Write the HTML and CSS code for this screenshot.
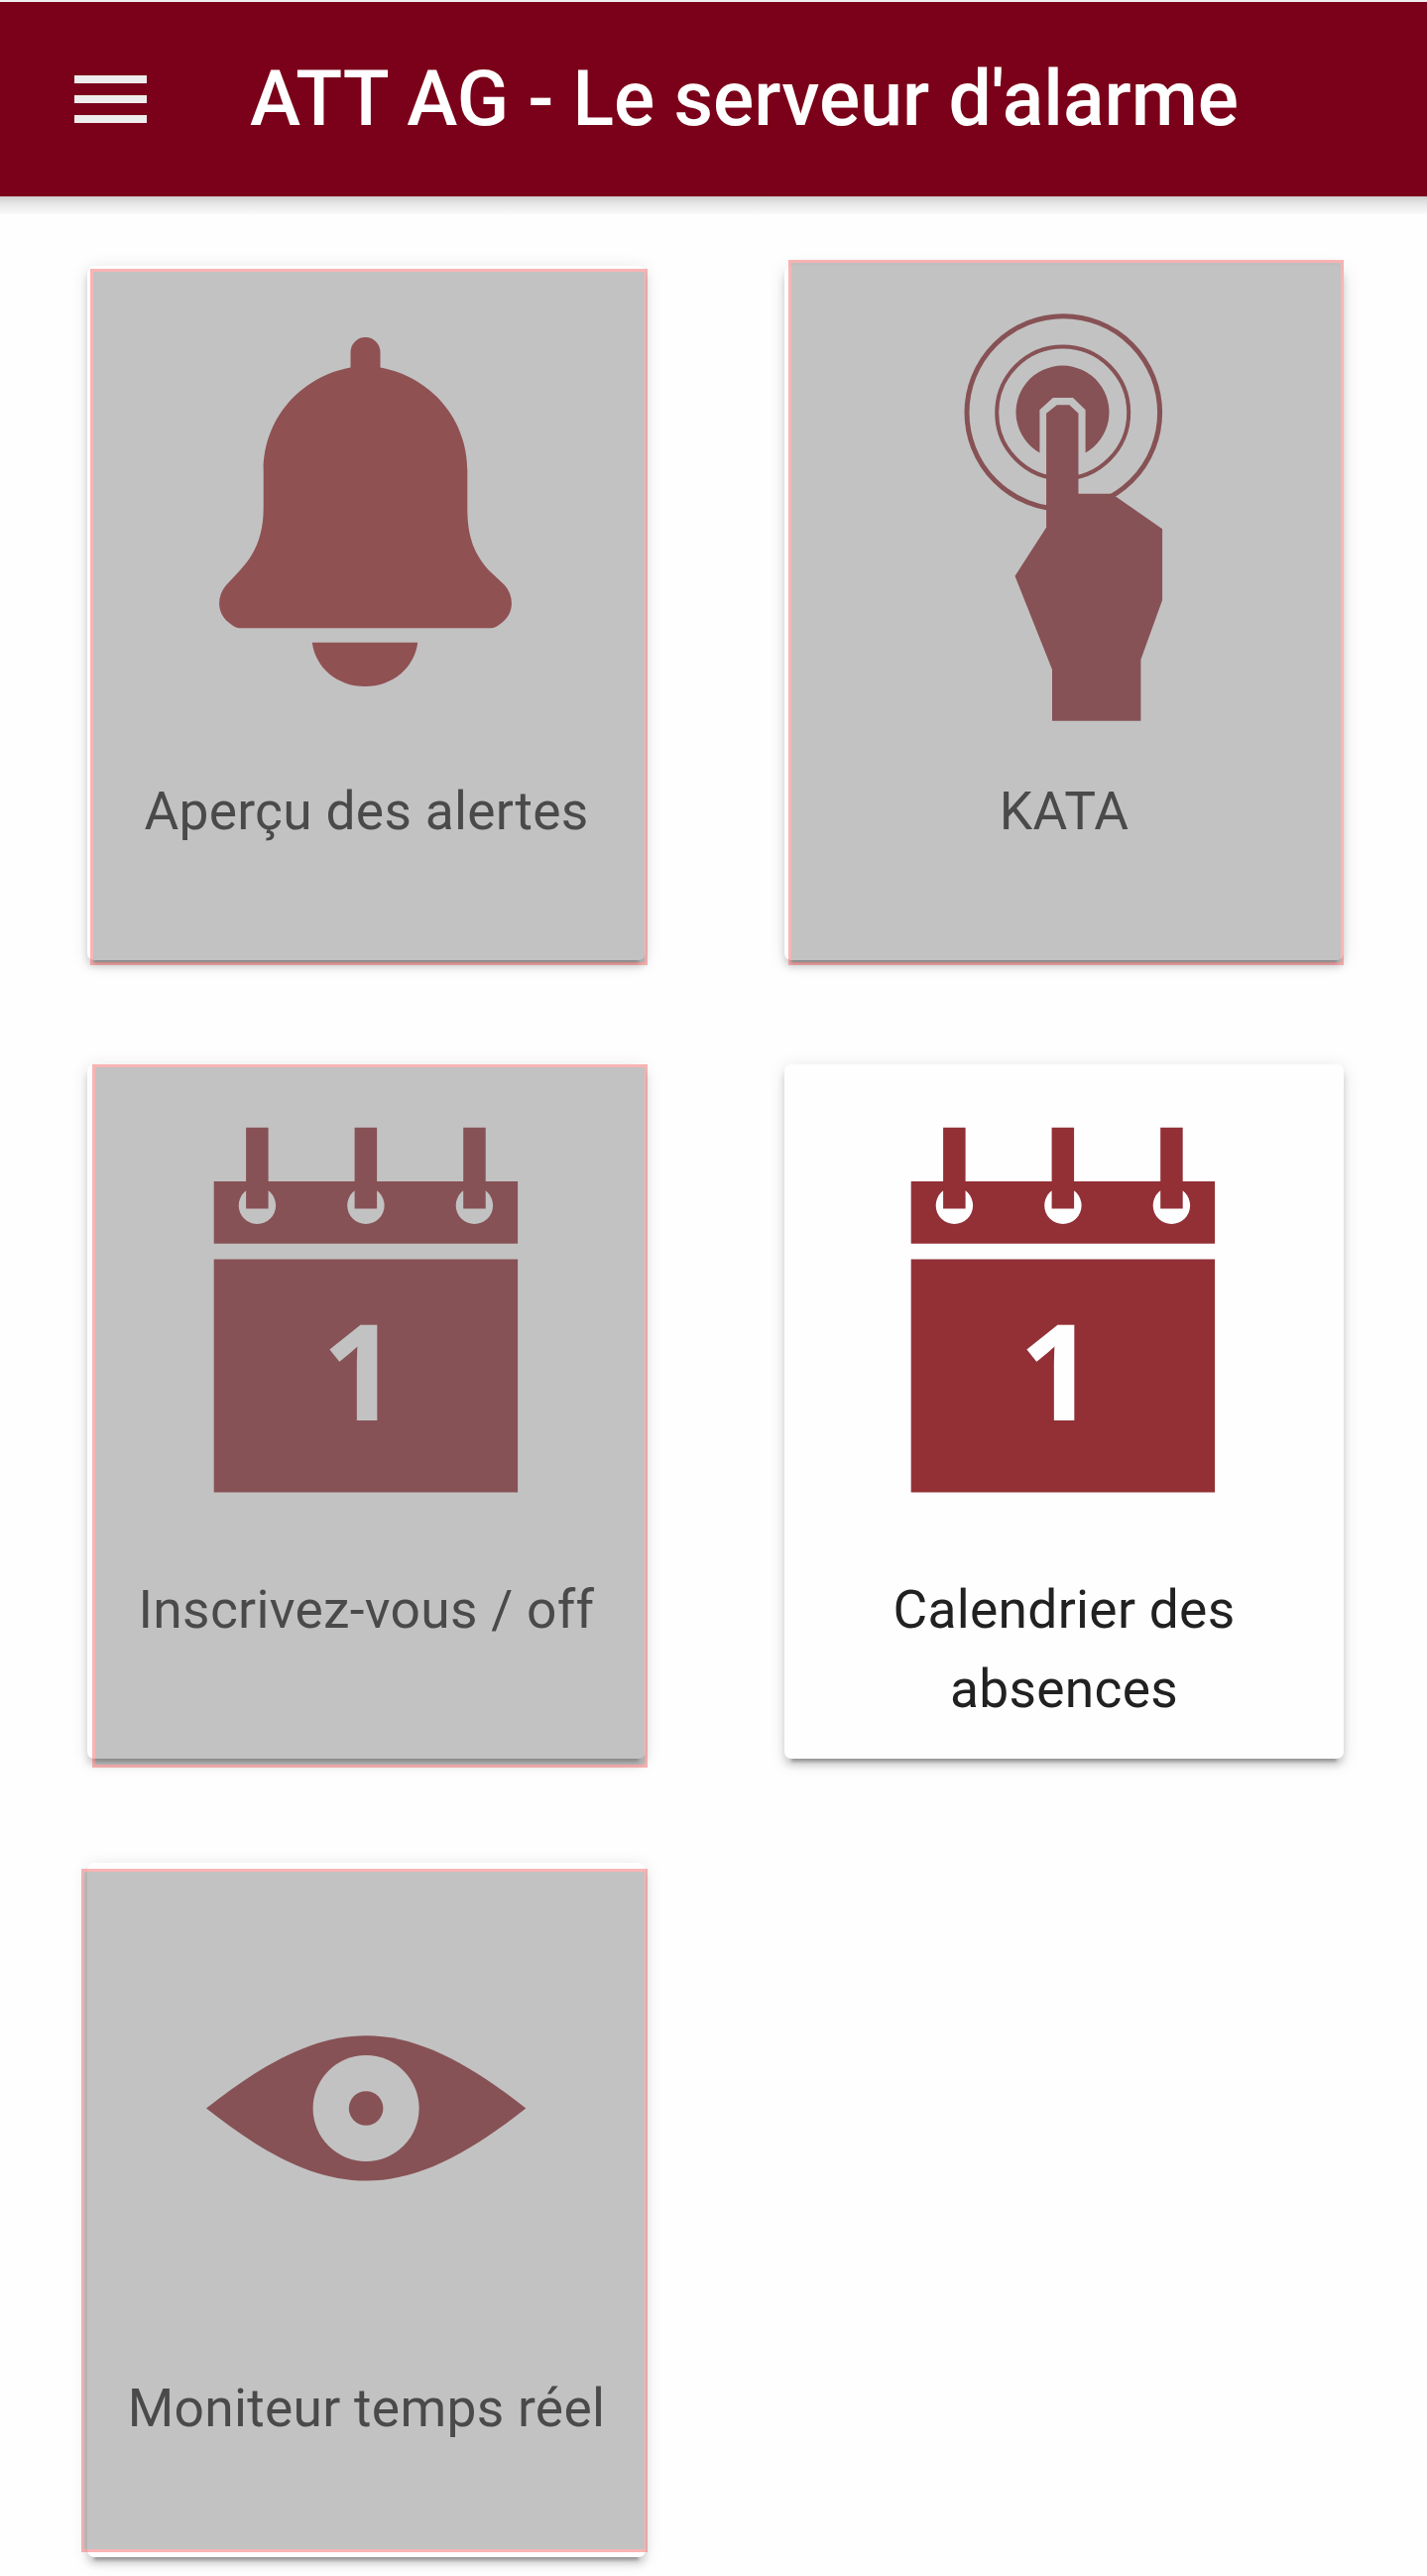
FILE: index.html
```html
<!DOCTYPE html>
<html lang="fr">
<head>
    <meta charset="UTF-8">
    <meta name="viewport" content="width=device-width, initial-scale=1.0">
    <title>ATT AG - Le serveur d'alarme</title>
    <link rel="stylesheet" href="styles.css">
</head>
<body>

<header class="toolbar">
    <button class="menu-button" aria-label="Menu">
        <span class="bar"></span>
        <span class="bar"></span>
        <span class="bar"></span>
    </button>
    <h1 class="title">ATT AG - Le serveur d'alarme</h1>
</header>

<main class="tiles">
    <div class="card">
        <svg class="icon icon-bell" viewBox="0 0 563 510">
            <path d="M265.500 87a15 15 0 0 1 30 0V102.500C347 112 383.300 155 383.300 206V244C383.300 275 391 291 405 307L421 322C431 334 430 350 419 359C412 365 409 365.300 404 365.300H157C152 365.300 149 365 142 359C131 350 130 334 140 322L154 307C169 291 177.700 272 177.700 244V206C177.700 155 214 112 265.500 102.500Z"/>
            <path d="M226.800 379.700H333.200C330 405 308 424 280 424S230 405 226.800 379.700Z"/>
        </svg>
        <p class="label">Aperçu des alertes</p>
        <div class="overlay overlay-alerts"></div>
    </div>

    <div class="card">
        <svg class="icon" viewBox="0 0 563 510">
            <circle class="ring" cx="281.300" cy="148" r="97.300" stroke-width="5"/>
            <circle class="ring" cx="280.700" cy="148" r="66.500" stroke-width="4"/>
            <path d="M257.400 188.500A47 47 0 1 1 303.600 188.500V145.300L291 133H270.800L257.400 145.300Z"/>
            <path d="M264.100 148.700L274.800 140.300H287.400L296.500 148.700V229.700H330.100L381.100 265.300V337L359.400 397V458.700H270V407L232.500 312.700L264.100 263.700Z"/>
        </svg>
        <p class="label">KATA</p>
        <div class="overlay overlay-kata"></div>
    </div>

    <div class="card">
        <svg class="icon" viewBox="0 0 563 510">
            <path d="M127.700 117.900H434.100V180.800H127.700Z"/>
            <path d="M127.700 196.400H434.100V431.500H127.700Z"/>
            <g class="cutout">
                <circle cx="171.400" cy="142.300" r="18.700"/>
                <circle cx="280.900" cy="142.300" r="18.700"/>
                <circle cx="390.400" cy="142.300" r="18.700"/>
                <text class="day" x="275" y="359">1</text>
            </g>
            <path d="M160.100 63.700h22.500v81.800h-22.500ZM269.600 63.700h22.500v81.800h-22.500ZM379.200 63.700h22.500v81.800h-22.500Z"/>
        </svg>
        <p class="label">Inscrivez-vous / off</p>
        <div class="overlay overlay-signin"></div>
    </div>

    <div class="card">
        <svg class="icon" viewBox="0 0 563 510">
            <path d="M127.700 117.900H434.100V180.800H127.700Z"/>
            <path d="M127.700 196.400H434.100V431.500H127.700Z"/>
            <g class="cutout">
                <circle cx="171.400" cy="142.300" r="18.700"/>
                <circle cx="280.900" cy="142.300" r="18.700"/>
                <circle cx="390.400" cy="142.300" r="18.700"/>
                <text class="day" x="275" y="359">1</text>
            </g>
            <path d="M160.100 63.700h22.500v81.800h-22.500ZM269.600 63.700h22.500v81.800h-22.500ZM379.200 63.700h22.500v81.800h-22.500Z"/>
        </svg>
        <p class="label">Calendrier des absences</p>
    </div>

    <div class="card">
        <svg class="icon" viewBox="0 0 563 510">
            <path d="M120 247.500C180 200 230 174.200 281 174.200S382 200 442.300 247.500C382 295 332 320.500 281 320.500S180 295 120 247.500Z"/>
            <circle class="cutout" cx="281.100" cy="247.500" r="53.500"/>
            <circle cx="281.100" cy="247.500" r="17.300"/>
        </svg>
        <p class="label">Moniteur temps réel</p>
        <div class="overlay overlay-monitor"></div>
    </div>
</main>

</body>
</html>
```
FILE: styles.css
```css
body {
    margin: 0;
    background-color: #fefefe;
    font-family: Roboto, sans-serif;
}
.toolbar {
    position: relative;
    display: flex;
    align-items: center;
    height: 198px;
    box-sizing: border-box;
    padding-left: 75px;
    border-top: 2px solid #f1eef0;
    background-color: #7b0019;
}
/* shadow under the toolbar */
.toolbar::after {
    content: "";
    position: absolute;
    top: 100%;
    left: 0;
    right: 0;
    height: 18px;
    background: linear-gradient(#cfcfcf, #e8e8e8 45%, #fafafa);
}
.menu-button {
    display: flex;
    flex-direction: column;
    gap: 11.5px;
    width: 73px;
    padding: 0;
    border: none;
    background: none;
    cursor: pointer;
}
.bar {
    height: 8.5px;
    background-color: #eeeced;
}
.title {
    margin: 0 0 0 104px;
    font-size: 77px;
    font-weight: 500;
    line-height: 100px;
    white-space: nowrap;
    color: white;
}
.tiles {
    display: grid;
    grid-template-columns: 563px 564px;
    grid-auto-rows: 700px;
    gap: 105px 140px;
    padding: 70px 84px 19px 88px;
}
.card {
    position: relative;
    border-radius: 7px;
    background-color: #fefefe;
    box-shadow: 0 10px 3px -7px rgba(0, 0, 0, 0.26),
        0 7px 7px 0 rgba(0, 0, 0, 0.14),
        0 3px 17px 0 rgba(0, 0, 0, 0.12);
}
.icon {
    display: block;
    width: 563px;
    height: 510px;
    fill: #923036;
}
.icon-bell {
    fill: #a12e33;
}
.ring {
    fill: none;
    stroke: #923036;
}
.cutout {
    fill: #fefefe;
}
.day {
    font-family: "Open Sans", sans-serif;
    font-size: 135px;
    font-weight: 700;
    text-anchor: middle;
}
.label {
    margin: 0 30px;
    font-size: 53.3px;
    line-height: 80px;
    letter-spacing: 0.3px;
    text-align: center;
    color: #212121;
}
/* grey mask over the tiles that are not in use */
.overlay {
    position: absolute;
    border: 3px solid rgba(243, 87, 87, 0.44);
    background-color: rgba(123, 123, 123, 0.455);
    background-clip: padding-box;
}
.overlay-alerts {
    top: 3px;
    right: -2px;
    bottom: -5px;
    left: 3px;
}
.overlay-kata {
    top: -6px;
    right: 0;
    bottom: -5px;
    left: 4px;
}
.overlay-signin {
    top: 0;
    right: -2px;
    bottom: -9px;
    left: 5px;
}
.overlay-monitor {
    top: 6px;
    right: -2px;
    bottom: 5px;
    left: -6px;
}
```
